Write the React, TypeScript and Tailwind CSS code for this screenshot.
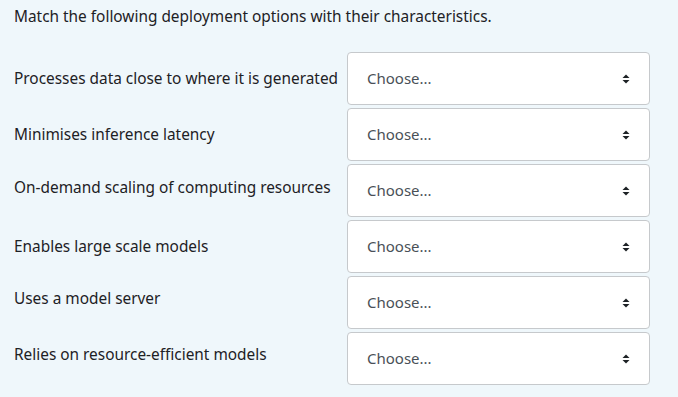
const rows = [
  { text: "Processes data close to where it is generated", lift: "pb-0" },
  { text: "Minimises inference latency", lift: "pb-0" },
  { text: "On-demand scaling of computing resources", lift: "pb-[6px]" },
  { text: "Enables large scale models", lift: "pb-0" },
  { text: "Uses a model server", lift: "pb-[8px]" },
  { text: "Relies on resource-efficient models", lift: "pb-[8px]" },
];

function Arrows() {
  return (
    <svg width="8" height="10" viewBox="0 0 8 10" className="text-[#1d2125]">
      <path d="M4 0.5 L7.5 4 L0.5 4 Z" fill="currentColor" />
      <path d="M4 9.5 L7.5 6 L0.5 6 Z" fill="currentColor" />
    </svg>
  );
}

export default function App() {
  return (
    <div
      className="w-[678px] h-[397px] bg-[#eff7fb] text-[#1d2125] pl-[14px] pt-[6px]"
      style={{ fontFamily: '"Noto Sans", sans-serif' }}
    >
      <p className="text-[15.4px] leading-[22px]">
        Match the following deployment options with their characteristics.
      </p>
      <div className="mt-[24px] grid grid-cols-[333px_303px] gap-y-[3px]">
        {rows.map((r) => (
          <div key={r.text} className="contents">
            <div className={`flex items-center text-[15.4px] ${r.lift}`}>{r.text}</div>
            <div className="h-[53px] bg-white border border-[#c6c9cc] rounded-[4px] flex items-center justify-between pl-[19px] pr-[19px]">
              <span className="text-[15px] text-[#495057]">Choose...</span>
              <Arrows />
            </div>
          </div>
        ))}
      </div>
    </div>
  );
}
